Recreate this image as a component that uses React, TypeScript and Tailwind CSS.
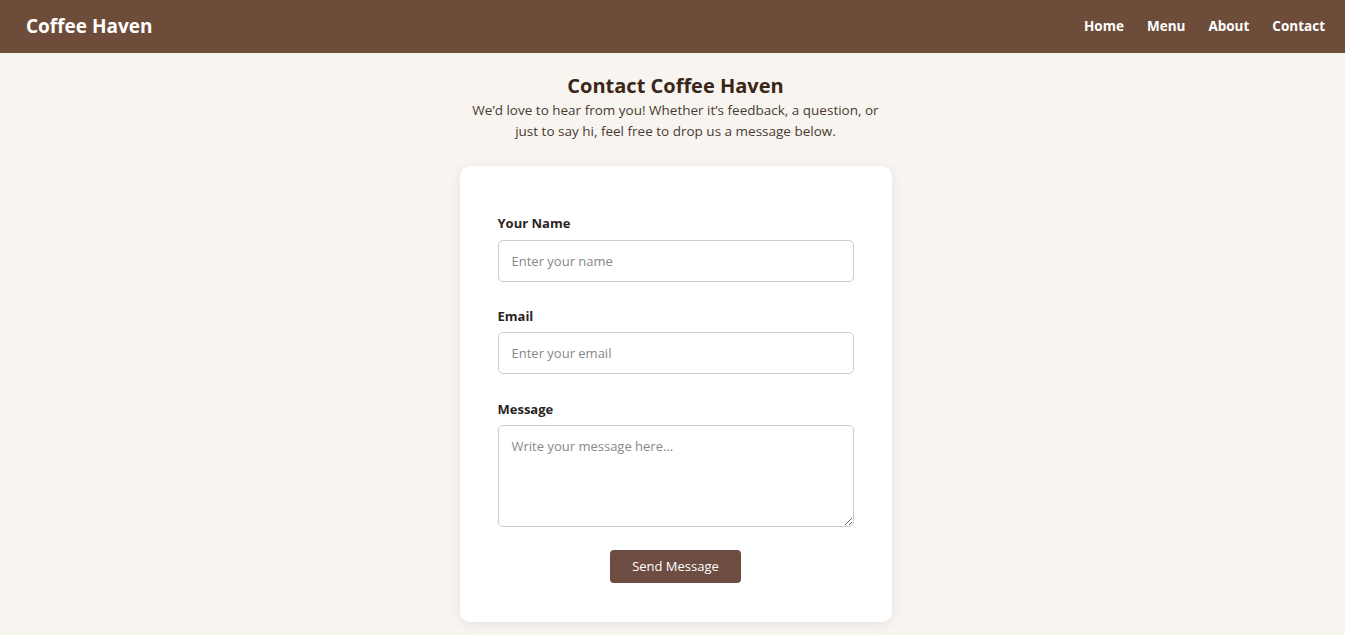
export default function App() {
  const font = { fontFamily: '"Open Sans", "Liberation Sans", sans-serif' };
  return (
    <div className="min-h-screen bg-[#f8f5f0] font-['Open_Sans','Liberation_Sans',sans-serif]">
      <header className="flex h-[53px] items-center justify-between bg-[#6d4d39] pl-[26px] pr-[20px] text-white">
        <h1 className="text-[19px] font-bold">Coffee Haven</h1>
        <nav className="flex gap-[23px] text-[13.5px] font-bold">
          <a href="#">Home</a>
          <a href="#">Menu</a>
          <a href="#">About</a>
          <a href="#">Contact</a>
        </nav>
      </header>

      <main className="flex flex-col items-center pt-[21px] pl-[6px]">
        <h2 className="text-[20px] font-bold leading-[24px] text-[#3a2618]">Contact Coffee Haven</h2>
        <p className="mt-[2px] max-w-[420px] text-center text-[13.5px] leading-[21px] text-[#4a3a30]">
          We’d love to hear from you! Whether it’s feedback, a question, or just to say hi, feel free to drop us a message below.
        </p>

        <form className="mt-[24px] w-[432px] rounded-[10px] bg-white px-[38px] pt-[49px] pb-[39px] shadow-[0_2px_12px_rgba(0,0,0,0.08)]">
          <label className="mb-[9px] block text-[13px] font-bold leading-[16px] text-[#2b2522]">Your Name</label>
          <input
            type="text"
            placeholder="Enter your name"
            className="block h-[42px] w-full rounded-[5px] border border-[#cccccc] px-[13px] text-[13px] placeholder:text-[#888]"
            style={font}
          />

          <label className="mt-[26px] mb-[8px] block text-[13px] font-bold leading-[16px] text-[#2b2522]">Email</label>
          <input
            type="email"
            placeholder="Enter your email"
            className="block h-[42px] w-full rounded-[5px] border border-[#cccccc] px-[13px] text-[13px] placeholder:text-[#888]"
            style={font}
          />

          <label className="mt-[27px] mb-[8px] block text-[13px] font-bold leading-[16px] text-[#2b2522]">Message</label>
          <textarea
            placeholder="Write your message here..."
            className="block h-[102px] w-full rounded-[5px] border border-[#cccccc] px-[13px] py-[11px] text-[13px] placeholder:text-[#888]"
            style={font}
          />

          <div className="mt-[23px] flex justify-center">
            <button
              type="submit"
              className="h-[33px] w-[131px] rounded-[4px] bg-[#6d4c41] text-[13px] text-white"
            >
              Send Message
            </button>
          </div>
        </form>
      </main>
    </div>
  );
}
